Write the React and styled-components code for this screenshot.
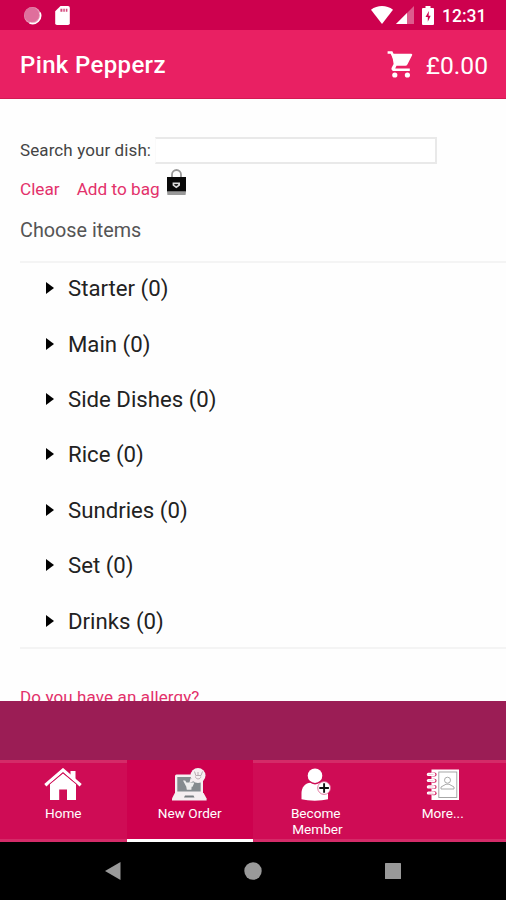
import React from 'react';
import styled, { createGlobalStyle } from 'styled-components';

const categories = [
	'Starter',
	'Main',
	'Side Dishes',
	'Rice',
	'Sundries',
	'Set',
	'Drinks',
];

const SyncIcon = () => (
	<svg width='19' height='19' viewBox='0 0 19 19'>
		<circle cx='9.5' cy='9.5' r='8.5' fill='#e797b7' />
		<circle cx='8.7' cy='8.7' r='7.4' fill='#df6f9c' />
		<path
			d='M17 6.5a8 8 0 0 1-10.5 10.4'
			fill='none'
			stroke='#fff'
			strokeWidth='1.6'
		/>
	</svg>
);

const SdCardIcon = () => (
	<svg width='15' height='19' viewBox='0 0 15 19'>
		<path
			d='M5.5 0H13a1.8 1.8 0 0 1 1.8 1.8v15.4A1.8 1.8 0 0 1 13 19H2a1.8 1.8 0 0 1-1.8-1.8V5.3z'
			fill='#fff'
		/>
		<path d='M5.4 2.7h2v3h-2zM8.300 2.700h1.500v3H8.300zM10.800 2.700h1.600v3h-1.600z' fill='#d4477c' />
	</svg>
);

const WifiIcon = () => (
	<svg width='22' height='18' viewBox='0 0 22 18'>
		<path d='M0 3.8C6.4-1.2 15.600-1.200 22 3.800L11 18z' fill='#fff' />
	</svg>
);

const SignalIcon = () => (
	<svg width='18' height='18' viewBox='0 0 18 18'>
		<path d='M0 18L18 0v18z' fill='#dd5c8d' />
		<path d='M0 18L11 7v11z' fill='#fff' />
	</svg>
);

const BatteryIcon = () => (
	<svg width='12' height='19' viewBox='0 0 12 19'>
		<path
			d='M3.500 0h5v2H11a1 1 0 0 1 1 1v15a1 1 0 0 1-1 1H1a1 1 0 0 1-1-1V3a1 1 0 0 1 1-1h2.500z'
			fill='#fff'
		/>
		<path d='M6.900 5L3.500 11.100h2.300v4.700L8.700 9.800H6.600z' fill='#ce0450' />
	</svg>
);

const CartIcon = () => (
	<svg width='26' height='27' viewBox='0 0 26 27'>
		<path
			d='M.6 1.500h3.900l5.200 11.200'
			fill='none'
			stroke='#fff'
			strokeWidth='2.700'
		/>
		<path
			d='M5 2.800h19.200a1 1 0 0 1 .9 1.500l-4.700 9.200a2.300 2.300 0 0 1-2.100 1.300H9.500l-1.300 2.700h14.600V20H7c-2.100 0-3.200-1.900-2.100-3.800l1.700-3.100z'
			fill='#fff'
		/>
		<circle cx='7.800' cy='24' r='2.600' fill='#fff' />
		<circle cx='20.400' cy='24' r='2.600' fill='#fff' />
	</svg>
);

const BagIcon = () => (
	<svg width='19' height='27' viewBox='0 0 19 27'>
		<path
			d='M5 11V5.500a4.500 4.500 0 0 1 9 0V11'
			fill='none'
			stroke='#999'
			strokeWidth='1.800'
		/>
		<path d='M0 8h19v15H0z' fill='#090909' />
		<path d='M0 22.300h19l-.4 3.700H.4z' fill='#999' />
		<path d='M5.600 13.500h7.400v3l-3.700 2.700-3.700-2.700z' fill='#ddd' />
		<path d='M7.300 14.900h3.800v1l-1.900 1.400-1.900-1.400z' fill='#222' />
	</svg>
);

const HomeIcon = () => (
	<svg width='38' height='32' viewBox='0 0 38 32'>
		<path
			d='M1.300 17.200L19 2l17.700 15.200'
			fill='none'
			stroke='#fff'
			strokeWidth='3.200'
		/>
		<path d='M26.500 3h5v9l-5-4.300z' fill='#fff' />
		<path d='M6 16.300L19 5.500l13 10.800V32h-9V21.500h-7.800V32H6z' fill='#fff' />
		<path
			d='M4.500 16.900L19 4.700l14.500 12.200'
			fill='none'
			stroke='#cf0c55'
			strokeWidth='.7'
		/>
	</svg>
);

const OrderIcon = () => (
	<svg width='35' height='33' viewBox='0 0 35 33'>
		<path d='M4.500 6.500h25a1.500 1.500 0 0 1 1.500 1.500v17H3V8a1.500 1.500 0 0 1 1.500-1.500z' fill='#f5eff1' />
		<path d='M5.300 9h23.400v14.500H5.300z' fill='#858b8f' />
		<path d='M2.800 25h28.800l3 5.500v2H0v-2z' fill='#f5eff1' />
		<path d='M13 27.500h8.500l1 2H12z' fill='#777c80' />
		<path d='M11 12.500h2.200l1.200 2h8l-1.800 4.300h-1l-.2 3h-4.600l-.5-3z' fill='#eee' />
		<circle cx='26' cy='7.500' r='7.500' fill='#f5eff1' />
		<path d='M18.700 10l3.300 3-4.700 2z' fill='#f5eff1' />
		<path
			d='M22.500 3.500l1.300 4h5.200l1.500-4M23.500 8.500c0 3.200 5.300 3.200 5.300 0M26 4v3.500'
			fill='none'
			stroke='#b8abb1'
			strokeWidth='1'
		/>
	</svg>
);

const MemberIcon = () => (
	<svg width='30' height='33' viewBox='0 0 30 33'>
		<path
			d='M.5 31.300V25c0-5.700 4-10.200 9-10.200h9c5 0 8.500 5 8.500 10.200v6.300c-7 1.800-19.500 1.800-26.500 0z'
			fill='#fff'
		/>
		<ellipse cx='14' cy='8' rx='7.800' ry='8.500' fill='#cf0c55' />
		<circle cx='14' cy='7.700' r='7.300' fill='#fff' />
		<circle cx='23.100' cy='20' r='6.400' fill='#fff' stroke='#dc5588' strokeWidth='.8' />
		<path d='M23.100 15.200v9.600M18.300 20h9.600' stroke='#111' strokeWidth='1.900' />
	</svg>
);

const ContactsIcon = () => (
	<svg width='33' height='31' viewBox='0 0 33 31'>
		<path d='M5.500.5H33V31H5.500z' fill='#fff' />
		{[4.5, 10.7, 17, 23.2].map((y) => (
			<g key={y}>
				<rect x='4.800' y={y - 1} width='5.800' height='4' rx='2' fill='#d73470' />
				<rect x='.800' y={y - 0.7} width='8.500' height='3.100' rx='1.500' fill='#fff' />
				<path d={`M2.500 ${y + 1}h5`} stroke='#e6b9ca' strokeWidth='.7' />
			</g>
		))}
		<rect x='12.800' y='3' width='18' height='25.500' fill='none' stroke='#9d9d9d' strokeWidth='.9' />
		<circle cx='21.500' cy='11.200' r='3' fill='none' stroke='#aaa' strokeWidth='1' />
		<path
			d='M15 20v-2l5-2.800h3l5 2.800v2z'
			fill='none'
			stroke='#aaa'
			strokeWidth='1'
		/>
	</svg>
);

const tabs = [
	{ label: 'Home', icon: <HomeIcon /> },
	{ label: 'New Order', icon: <OrderIcon />, active: true },
	{ label: 'Become\n Member', icon: <MemberIcon />, shift: -1 },
	{ label: 'More...', icon: <ContactsIcon /> },
];

export default function App() {
	return (
		<>
			<GlobalStyle />
			<Screen>
				<StatusBar>
					<StatusGroup $gap={13}>
						<SyncIcon />
						<SdCardIcon />
					</StatusGroup>
					<StatusGroup>
						<WifiIcon />
						<SignalSlot>
							<SignalIcon />
						</SignalSlot>
						<BatteryIcon />
						<Clock>12:31</Clock>
					</StatusGroup>
				</StatusBar>

				<AppBar>
					<Title>Pink Pepperz</Title>
					<Basket>
						<CartIcon />
						<Total>£0.00</Total>
					</Basket>
				</AppBar>

				<Content>
					<SearchRow>
						<SearchLabel htmlFor='dish'>Search your dish:</SearchLabel>
						<SearchInput id='dish' />
					</SearchRow>
					<Actions>
						<TextLink>Clear</TextLink>
						<TextLink>Add to bag</TextLink>
						<BagIcon />
					</Actions>
					<SectionTitle>Choose items</SectionTitle>
					<CategoryList>
						{categories.map((name) => (
							<Category key={name}>
								<Caret />
								{name} (0)
							</Category>
						))}
					</CategoryList>
					<AllergyLink>Do you have an allergy?</AllergyLink>
				</Content>

				<Banner />

				<TabBar>
					{tabs.map((tab) => (
						<Tab key={tab.label} $active={tab.active}>
							<TabIcon>{tab.icon}</TabIcon>
							<TabLabel $shift={tab.shift}>{tab.label}</TabLabel>
						</Tab>
					))}
				</TabBar>

				<SystemNav>
					<svg width='16' height='18' viewBox='0 0 16 18'>
						<path d='M0 9L15.500 0v18z' fill='#999' />
					</svg>
					<svg width='18' height='18' viewBox='0 0 18 18'>
						<circle cx='9' cy='9' r='8.700' fill='#999' />
					</svg>
					<svg width='16' height='16' viewBox='0 0 16 16'>
						<rect width='16' height='16' rx='.500' fill='#999' />
					</svg>
				</SystemNav>
			</Screen>
		</>
	);
}

const GlobalStyle = createGlobalStyle`
	* {
		box-sizing: border-box;
	}
	body {
		margin: 0;
		font-family: Roboto, sans-serif;
	}
	svg {
		display: block;
		flex: none;
	}
`;

const Screen = styled.div`
	display: flex;
	flex-direction: column;
	width: 506px;
	height: 900px;
	overflow: hidden;
	background: #fefefe;
`;

const StatusBar = styled.header`
	display: flex;
	justify-content: space-between;
	height: 30px;
	padding: 0 19px 0 23px;
	background: #cd014e;
`;

const StatusGroup = styled.div`
	display: flex;
	align-items: center;
	gap: ${(props) => props.$gap || 0}px;
`;

const SignalSlot = styled.div`
	margin: 0 8px 0 3px;
`;

const Clock = styled.span`
	width: 45px;
	margin-left: 8px;
	padding-top: 1px;
	color: #fff;
	font-size: 17.5px;
	font-weight: 500;
	line-height: 30px;
	white-space: nowrap;
`;

const AppBar = styled.div`
	display: flex;
	align-items: center;
	justify-content: space-between;
	height: 69px;
	padding: 0 18px 0 20px;
	border-bottom: 1px solid #d31a53;
	background: #e92063;
	color: #fff;
`;

const Title = styled.h1`
	margin: 2px 0 0;
	font-size: 24px;
	font-weight: 500;
	letter-spacing: 0.35px;
	line-height: 30px;
`;

const Basket = styled.div`
	display: flex;
	align-items: center;
	gap: 13px;
`;

const Total = styled.span`
	padding-top: 3px;
	font-size: 24.6px;
	line-height: 30px;
`;

const Content = styled.main`
	height: 602px;
	padding: 38px 0 0 20px;
	overflow: hidden;
`;

const SearchRow = styled.div`
	display: flex;
	align-items: center;
	height: 27px;
`;

const SearchLabel = styled.label`
	width: 135px;
	padding-bottom: 2px;
	color: #444;
	font-size: 17px;
	letter-spacing: 0.1px;
	line-height: 24px;
	white-space: nowrap;
`;

const SearchInput = styled.input`
	width: 282px;
	height: 27px;
	padding: 0 6px;
	border: 2px solid #e9e9e9;
	border-left: 1px solid #fafafa;
	background: #fff;
	font: inherit;
`;

const Actions = styled.div`
	display: flex;
	align-items: center;
	height: 42px;
	margin-top: 4px;

	svg {
		margin: -13px 0 0 7px;
	}
`;

const TextLink = styled.a`
	color: #e3316b;
	font-size: 17.2px;
	line-height: 24px;

	& + & {
		margin-left: 17px;
	}
`;

const SectionTitle = styled.h2`
	height: 51px;
	margin: 0;
	padding-top: 9px;
	color: #555;
	font-size: 19.8px;
	font-weight: 400;
	line-height: 24px;
`;

const CategoryList = styled.ul`
	height: 388px;
	padding: 0;
	margin: 0;
	border-top: 2px solid #f4f4f4;
	border-bottom: 2px solid #f4f4f4;
	list-style: none;
`;

const Category = styled.li`
	display: flex;
	align-items: center;
	height: 55.4px;
	padding: 0 0 5px 26px;
	color: #222;
	font-size: 22.2px;
`;

const Caret = styled.span`
	margin-right: 14px;
	border: 6.500px solid transparent;
	border-right-width: 0;
	border-left: 8px solid #000;
`;

const AllergyLink = styled.a`
	display: block;
	margin-top: 36px;
	color: #e3316b;
	font-size: 17px;
	letter-spacing: 0.12px;
	line-height: 24px;
`;

const Banner = styled.div`
	height: 59px;
	background: #9b1d55;
`;

const TabBar = styled.nav`
	display: grid;
	grid-template-columns: repeat(4, 1fr);
	height: 82px;
`;

const Tab = styled.div`
	display: flex;
	flex-direction: column;
	align-items: center;
	padding-top: 4px;
	border-top: 3px solid ${(props) => (props.$active ? '#cd014e' : '#d42b68')};
	border-bottom: 3px solid ${(props) => (props.$active ? '#fff' : '#d42b68')};
	background: ${(props) => (props.$active ? '#cd014e' : '#cf0c55')};
`;

const TabIcon = styled.div`
	display: flex;
	align-items: center;
	justify-content: center;
	height: 34px;
`;

const TabLabel = styled.span`
	margin: 4px 0 0 ${(props) => props.$shift || 0}px;
	color: #fff;
	font-size: 13.6px;
	line-height: 16px;
	text-align: center;
	white-space: pre;
`;

const SystemNav = styled.footer`
	display: flex;
	align-items: center;
	justify-content: space-between;
	height: 58px;
	padding: 0 105px;
	background: #000;
`;
